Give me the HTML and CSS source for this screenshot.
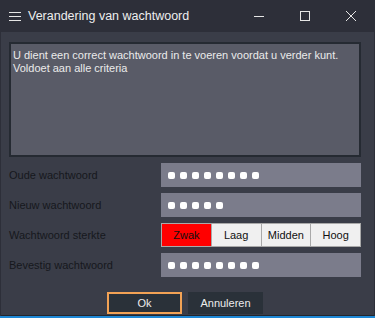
FILE: index.html
```html
<!DOCTYPE html>
<html>
<head>
<meta charset="utf-8">
<link rel="stylesheet" href="styles.css">
</head>
<body>
<div class="window">
  <div class="titlebar">
    <svg class="menu-icon" width="12" height="9" viewBox="0 0 12 9"><path d="M0 0.5H12M0 4.5H12M0 8.5H12" stroke="#e6e6e6" stroke-width="1"/></svg>
    <span class="title">Verandering van wachtwoord</span>
    <div class="controls">
      <svg width="12" height="12" viewBox="0 0 12 12"><path d="M1 6.5H11" stroke="#e6e6e6" stroke-width="1"/></svg>
      <svg width="12" height="12" viewBox="0 0 12 12"><rect x="1.5" y="1.5" width="9" height="9" fill="none" stroke="#e6e6e6" stroke-width="1"/></svg>
      <svg width="12" height="12" viewBox="0 0 12 12"><path d="M1 1L11 11M11 1L1 11" stroke="#e6e6e6" stroke-width="1"/></svg>
    </div>
  </div>
  <div class="body">
    <div class="message">U dient een correct wachtwoord in te voeren voordat u verder kunt.<br>Voldoet aan alle criteria</div>
    <div class="form">
      <div class="row">
        <span class="label">Oude wachtwoord</span>
        <div class="field"><i></i><i></i><i></i><i></i><i></i><i></i><i></i><i></i></div>
      </div>
      <div class="row">
        <span class="label">Nieuw wachtwoord</span>
        <div class="field"><i></i><i></i><i></i><i></i><i></i></div>
      </div>
      <div class="row">
        <span class="label">Wachtwoord sterkte</span>
        <div class="strength">
          <span class="seg active">Zwak</span>
          <span class="seg">Laag</span>
          <span class="seg">Midden</span>
          <span class="seg">Hoog</span>
        </div>
      </div>
      <div class="row">
        <span class="label">Bevestig wachtwoord</span>
        <div class="field"><i></i><i></i><i></i><i></i><i></i><i></i><i></i><i></i></div>
      </div>
    </div>
    <div class="actions">
      <button class="btn primary">Ok</button>
      <button class="btn">Annuleren</button>
    </div>
  </div>
</div>
</body>
</html>
```
FILE: styles.css
```css
* { box-sizing: border-box; }
html, body { margin: 0; padding: 0; }
body {
  width: 375px;
  height: 318px;
  overflow: hidden;
  font-family: "Liberation Sans", Arial, sans-serif;
  background: #2d2f39;
}
.window {
  width: 375px;
  height: 318px;
  display: flex;
  flex-direction: column;
  background: #2d2f39;
  border-bottom: 2px solid #1e88d6;
}
.titlebar {
  height: 32px;
  flex: none;
  display: flex;
  align-items: center;
  padding-left: 9px;
  color: #ececec;
}
.title {
  margin-left: 7px;
  font-size: 12.5px;
  color: #eeeeee;
}
.controls {
  margin-left: auto;
  display: flex;
  align-items: center;
  gap: 34px;
  padding-right: 18px;
}
.body {
  flex: 1;
  margin: 0 1px;
  background: #3a3d48;
  border-bottom: 1px solid #23262d;
  padding: 10px 13px 0 8px;
  display: flex;
  flex-direction: column;
}
.message {
  height: 115px;
  background: #595b67;
  border: 2px solid #252a32;
  color: #ebebeb;
  font-size: 11px;
  line-height: 13px;
  padding: 5px 2px;
}
.form {
  margin-top: 6px;
  display: flex;
  flex-direction: column;
  gap: 6px;
}
.row {
  display: flex;
  align-items: center;
  height: 24px;
}
.label {
  width: 152px;
  color: #16181d;
  font-size: 11px;
}
.field {
  width: 200px;
  height: 24px;
  background: #7b7c8b;
  display: flex;
  align-items: center;
  gap: 5px;
  padding-left: 7px;
}
.field i {
  width: 7px;
  height: 7px;
  background: #ffffff;
  border-radius: 2px;
}
.strength {
  display: flex;
  width: 200px;
  height: 24px;
}
.seg {
  flex: 1;
  display: flex;
  align-items: center;
  justify-content: center;
  background: #f0f0f0;
  border: 1px solid #a9a9a9;
  font-size: 11px;
  color: #111111;
}
.seg + .seg { border-left: none; }
.seg.active { background: #ff0000; }
.actions {
  margin-top: 15px;
  display: flex;
  gap: 6px;
  padding-left: 98px;
}
.btn {
  width: 75px;
  height: 22px;
  border: none;
  background: #2a3139;
  color: #ececec;
  font-family: "Liberation Sans", Arial, sans-serif;
  font-size: 11px;
  padding: 0;
}
.btn.primary { border: 2px solid #f2a255; }
```
